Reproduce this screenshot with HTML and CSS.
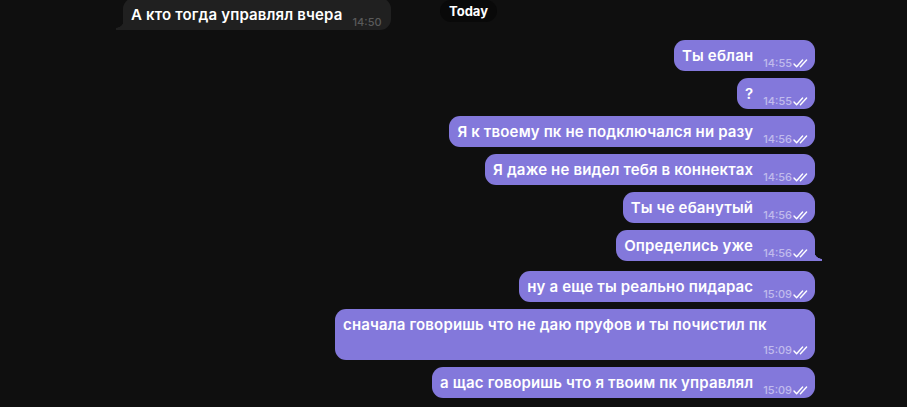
FILE: index.html
```html
<!DOCTYPE html>
<html lang="ru">
<head>
<meta charset="utf-8">
<title>Chat</title>
<link rel="stylesheet" href="styles.css">
</head>
<body>
<div class="chat">
  <div class="date-pill">Today</div>

  <div class="msg in tail">
    <span class="text">А кто тогда управлял вчера</span>
    <span class="meta"><span class="time">14:50</span></span>
  </div>

  <div class="msg out first">
    <span class="text">Ты еблан</span>
    <span class="meta"><span class="time">14:55</span><svg class="check" viewBox="0 0 16 9"><path d="M1 5 L3.6 7.8 L9.6 1 M7.4 7.8 L13.6 1"/></svg></span>
  </div>
  <div class="msg out">
    <span class="text">?</span>
    <span class="meta"><span class="time">14:55</span><svg class="check" viewBox="0 0 16 9"><path d="M1 5 L3.6 7.8 L9.6 1 M7.4 7.8 L13.6 1"/></svg></span>
  </div>
  <div class="msg out">
    <span class="text">Я к твоему пк не подключался ни разу</span>
    <span class="meta"><span class="time">14:56</span><svg class="check" viewBox="0 0 16 9"><path d="M1 5 L3.6 7.8 L9.6 1 M7.4 7.8 L13.6 1"/></svg></span>
  </div>
  <div class="msg out">
    <span class="text">Я даже не видел тебя в коннектах</span>
    <span class="meta"><span class="time">14:56</span><svg class="check" viewBox="0 0 16 9"><path d="M1 5 L3.6 7.8 L9.6 1 M7.4 7.8 L13.6 1"/></svg></span>
  </div>
  <div class="msg out">
    <span class="text">Ты че ебанутый</span>
    <span class="meta"><span class="time">14:56</span><svg class="check" viewBox="0 0 16 9"><path d="M1 5 L3.6 7.8 L9.6 1 M7.4 7.8 L13.6 1"/></svg></span>
  </div>
  <div class="msg out tail">
    <span class="text">Определись уже</span>
    <span class="meta"><span class="time">14:56</span><svg class="check" viewBox="0 0 16 9"><path d="M1 5 L3.6 7.8 L9.6 1 M7.4 7.8 L13.6 1"/></svg></span>
  </div>

  <div class="msg out first">
    <span class="text">ну а еще ты реально пидарас</span>
    <span class="meta"><span class="time">15:09</span><svg class="check" viewBox="0 0 16 9"><path d="M1 5 L3.6 7.8 L9.6 1 M7.4 7.8 L13.6 1"/></svg></span>
  </div>
  <div class="msg out wide">
    <span class="text">сначала говоришь что не даю пруфов и ты почистил пк</span>
    <span class="meta"><span class="time">15:09</span><svg class="check" viewBox="0 0 16 9"><path d="M1 5 L3.6 7.8 L9.6 1 M7.4 7.8 L13.6 1"/></svg></span>
  </div>
  <div class="msg out">
    <span class="text">а щас говоришь что я твоим пк управлял</span>
    <span class="meta"><span class="time">15:09</span><svg class="check" viewBox="0 0 16 9"><path d="M1 5 L3.6 7.8 L9.6 1 M7.4 7.8 L13.6 1"/></svg></span>
  </div>
</div>
</body>
</html>
```

FILE: styles.css
```css
* { box-sizing: border-box; }

html, body {
  margin: 0;
  height: 100%;
  background: #0f0f0f;
  overflow: hidden;
}

body {
  font-family: Inter, "Noto Sans", sans-serif;
  color: #ffffff;
}

.chat {
  position: relative;
  display: flex;
  flex-direction: column;
  align-items: flex-end;
  gap: 7px;
  padding: 0 92px 0 123px;
}

.date-pill {
  position: absolute;
  left: 440px;
  top: 0;
  width: 57px;
  height: 22px;
  border-radius: 11px;
  background: #090909;
  font-size: 13px;
  font-weight: 700;
  line-height: 22px;
  text-align: center;
  color: #ffffff;
}

.msg {
  position: relative;
  display: flex;
  align-items: flex-end;
  padding: 6px 6px 5px 8px;
  border-radius: 11px;
  font-size: 15px;
  font-weight: 600;
  line-height: 20px;
  white-space: nowrap;
}

.text {
  letter-spacing: 0.15px;
}

.msg.out {
  background: #8378db;
}

.msg.in {
  align-self: flex-start;
  background: #202020;
  margin-top: -2px;
  height: 32px;
  padding-top: 7px;
  padding-right: 9px;
}

.msg.first {
  margin-top: 3px;
}

.meta {
  display: flex;
  align-items: center;
  margin-left: 10px;
  margin-bottom: -4px;
  line-height: 14px;
  font-size: 11px;
  font-weight: 500;
}

.msg.out .time {
  color: rgba(255, 255, 255, 0.5);
}

.msg.in .time {
  color: #5a5a5a;
}

.check {
  width: 16px;
  height: 9px;
  margin-left: 1px;
  fill: none;
  stroke: #ffffff;
  stroke-width: 1.4;
  stroke-linecap: round;
  stroke-linejoin: round;
}

.msg.wide {
  width: 480px;
  flex-direction: column;
  align-items: stretch;
  padding-bottom: 3px;
}

.msg.wide .meta {
  align-self: flex-end;
  margin: 8px 0 0 0;
}

.msg.out.tail {
  border-bottom-right-radius: 0;
}

.msg.out.tail::after {
  content: "";
  position: absolute;
  right: -7px;
  bottom: 0;
  width: 7px;
  height: 10px;
  background: radial-gradient(circle at 100% 0, transparent 7.5px, #8378db 8px);
}

.msg.in.tail {
  border-bottom-left-radius: 0;
}

.msg.in.tail::after {
  content: "";
  position: absolute;
  left: -7px;
  bottom: 0;
  width: 7px;
  height: 10px;
  background: radial-gradient(circle at 0 0, transparent 7.5px, #202020 8px);
}
```
